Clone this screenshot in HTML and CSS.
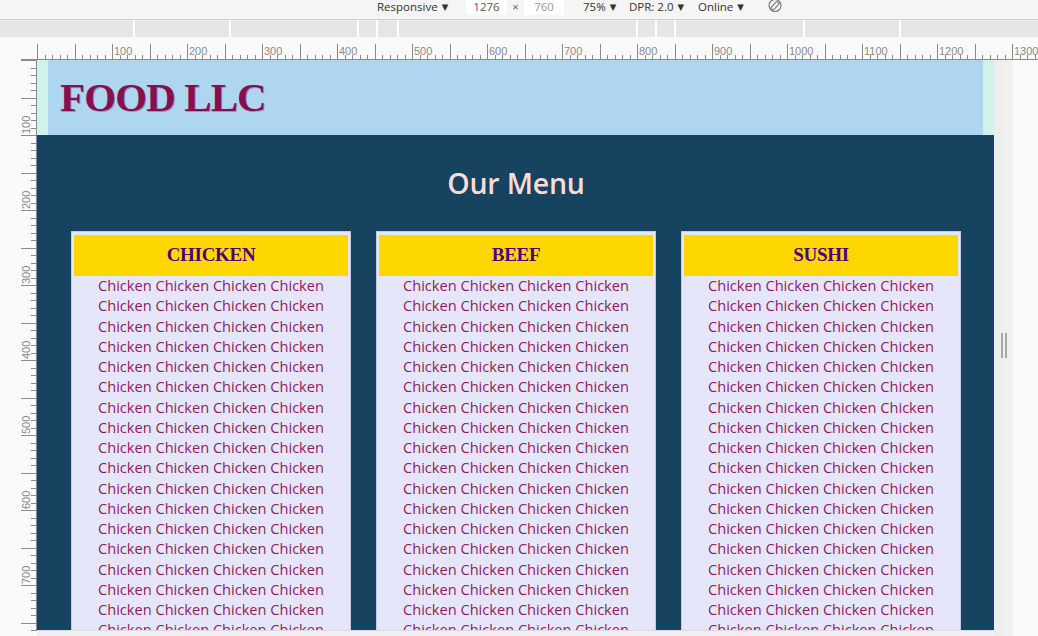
FILE: index.html
```html
<!DOCTYPE html>
<html lang="en">
<head>
<meta charset="utf-8">
<title>FOOD LLC - Our Menu</title>
<link rel="stylesheet" href="styles.css">
</head>
<body>
<div class="devtools">
  <div class="toolbar">
    <span class="tb-select tb-resp">Responsive <span class="caret">▼</span></span>
    <span class="tb-input">1276</span>
    <span class="tb-x">×</span>
    <span class="tb-input tb-dim">760</span>
    <span class="tb-spacer"></span>
    <span class="tb-select tb-zoom">75% <span class="caret">▼</span></span>
    <span class="tb-select tb-dpr">DPR: 2.0 <span class="caret">▼</span></span>
    <span class="tb-select tb-net">Online <span class="caret">▼</span></span>
    <svg class="tb-icon" width="16" height="14" viewBox="0 0 16 14">
      <circle cx="8" cy="6.5" r="6" fill="none" stroke="#777" stroke-width="1.1"/>
      <path d="M3.6 9.2 L9.6 2.4 M6.4 11.2 L12.4 4.4 M3.6 9.2 L6.4 11.2 M9.6 2.4 L12.4 4.4" fill="none" stroke="#777" stroke-width="1.1"/>
    </svg>
  </div>
  <div class="mediabar">
    <span class="mq mq-a"></span><span class="mq mq-b"></span><span class="mq mq-c"></span><span class="mq mq-d"></span><span class="mq mq-e"></span><span class="mq mq-f"></span><span class="mq mq-d"></span><span class="mq mq-d"></span><span class="mq mq-g"></span><span class="mq mq-b"></span><span class="mq mq-rest"></span>
  </div>
  <div class="hruler">
    <svg width="1038" height="23" viewBox="0 0 1038 23">
      <defs>
        <pattern id="hticks" x="37" y="0" width="75" height="23" patternUnits="userSpaceOnUse">
          <rect x="0" y="7" width="1" height="16" fill="#8a8a8a"/>
          <rect x="8" y="18" width="1" height="5" fill="#8a8a8a"/>
          <rect x="15" y="18" width="1" height="5" fill="#8a8a8a"/>
          <rect x="23" y="18" width="1" height="5" fill="#8a8a8a"/>
          <rect x="30" y="18" width="1" height="5" fill="#8a8a8a"/>
          <rect x="38" y="7" width="1" height="16" fill="#8a8a8a"/>
          <rect x="45" y="18" width="1" height="5" fill="#8a8a8a"/>
          <rect x="53" y="18" width="1" height="5" fill="#8a8a8a"/>
          <rect x="60" y="18" width="1" height="5" fill="#8a8a8a"/>
          <rect x="68" y="18" width="1" height="5" fill="#8a8a8a"/>
        </pattern>
      </defs>
      <rect x="37" y="0" width="1001" height="23" fill="url(#hticks)"/>
      <rect x="21" y="22" width="1017" height="1" fill="#8a8a8a"/>
      <g class="rlabel">
        <text x="114" y="18">100</text>
        <text x="189" y="18">200</text>
        <text x="264" y="18">300</text>
        <text x="339" y="18">400</text>
        <text x="414" y="18">500</text>
        <text x="489" y="18">600</text>
        <text x="564" y="18">700</text>
        <text x="639" y="18">800</text>
        <text x="714" y="18">900</text>
        <text x="789" y="18">1000</text>
        <text x="864" y="18">1100</text>
        <text x="939" y="18">1200</text>
        <text x="1014" y="18">1300</text>
      </g>
    </svg>
  </div>
  <div class="stage">
    <div class="vruler">
      <svg width="37" height="576" viewBox="0 0 37 576">
        <defs>
          <pattern id="vticks" x="0" y="0" width="37" height="75" patternUnits="userSpaceOnUse">
            <rect x="21" y="0" width="15" height="1" fill="#8a8a8a"/>
            <rect x="31" y="8" width="5" height="1" fill="#8a8a8a"/>
            <rect x="31" y="15" width="5" height="1" fill="#8a8a8a"/>
            <rect x="31" y="23" width="5" height="1" fill="#8a8a8a"/>
            <rect x="31" y="30" width="5" height="1" fill="#8a8a8a"/>
            <rect x="21" y="38" width="15" height="1" fill="#8a8a8a"/>
            <rect x="31" y="45" width="5" height="1" fill="#8a8a8a"/>
            <rect x="31" y="53" width="5" height="1" fill="#8a8a8a"/>
            <rect x="31" y="60" width="5" height="1" fill="#8a8a8a"/>
            <rect x="31" y="68" width="5" height="1" fill="#8a8a8a"/>
          </pattern>
        </defs>
        <rect x="0" y="0" width="37" height="571" fill="url(#vticks)"/>
        <rect x="36" y="0" width="1" height="571" fill="#8a8a8a"/>
        <g class="rlabel">
          <text transform="translate(30 74) rotate(-90)">100</text>
          <text transform="translate(30 149) rotate(-90)">200</text>
          <text transform="translate(30 224) rotate(-90)">300</text>
          <text transform="translate(30 299) rotate(-90)">400</text>
          <text transform="translate(30 374) rotate(-90)">500</text>
          <text transform="translate(30 449) rotate(-90)">600</text>
          <text transform="translate(30 524) rotate(-90)">700</text>
        </g>
      </svg>
    </div>
    <div class="device">
      <div class="viewport">
        <header class="site-header">
          <h1 class="brand">FOOD LLC</h1>
        </header>
        <main class="menu">
          <h2 class="menu-title">Our Menu</h2>
          <div class="cards">
            <section class="card">
              <h3 class="card-head">CHICKEN</h3>
              <p class="card-text">
Chicken Chicken Chicken Chicken Chicken Chicken Chicken Chicken
Chicken Chicken Chicken Chicken Chicken Chicken Chicken Chicken
Chicken Chicken Chicken Chicken Chicken Chicken Chicken Chicken
Chicken Chicken Chicken Chicken Chicken Chicken Chicken Chicken
Chicken Chicken Chicken Chicken Chicken Chicken Chicken Chicken
Chicken Chicken Chicken Chicken Chicken Chicken Chicken Chicken
Chicken Chicken Chicken Chicken Chicken Chicken Chicken Chicken
Chicken Chicken Chicken Chicken Chicken Chicken Chicken Chicken
Chicken Chicken Chicken Chicken Chicken Chicken Chicken Chicken
Chicken Chicken Chicken Chicken Chicken Chicken Chicken Chicken
              </p>
            </section>
            <section class="card">
              <h3 class="card-head">BEEF</h3>
              <p class="card-text">
Chicken Chicken Chicken Chicken Chicken Chicken Chicken Chicken
Chicken Chicken Chicken Chicken Chicken Chicken Chicken Chicken
Chicken Chicken Chicken Chicken Chicken Chicken Chicken Chicken
Chicken Chicken Chicken Chicken Chicken Chicken Chicken Chicken
Chicken Chicken Chicken Chicken Chicken Chicken Chicken Chicken
Chicken Chicken Chicken Chicken Chicken Chicken Chicken Chicken
Chicken Chicken Chicken Chicken Chicken Chicken Chicken Chicken
Chicken Chicken Chicken Chicken Chicken Chicken Chicken Chicken
Chicken Chicken Chicken Chicken Chicken Chicken Chicken Chicken
Chicken Chicken Chicken Chicken Chicken Chicken Chicken Chicken
              </p>
            </section>
            <section class="card">
              <h3 class="card-head">SUSHI</h3>
              <p class="card-text">
Chicken Chicken Chicken Chicken Chicken Chicken Chicken Chicken
Chicken Chicken Chicken Chicken Chicken Chicken Chicken Chicken
Chicken Chicken Chicken Chicken Chicken Chicken Chicken Chicken
Chicken Chicken Chicken Chicken Chicken Chicken Chicken Chicken
Chicken Chicken Chicken Chicken Chicken Chicken Chicken Chicken
Chicken Chicken Chicken Chicken Chicken Chicken Chicken Chicken
Chicken Chicken Chicken Chicken Chicken Chicken Chicken Chicken
Chicken Chicken Chicken Chicken Chicken Chicken Chicken Chicken
Chicken Chicken Chicken Chicken Chicken Chicken Chicken Chicken
Chicken Chicken Chicken Chicken Chicken Chicken Chicken Chicken
              </p>
            </section>
          </div>
        </main>
      </div>
      <div class="hscroll"></div>
    </div>
    <div class="rightstrip">
      <span class="handle"></span>
    </div>
  </div>
</div>
</body>
</html>
```

FILE: styles.css
```css
* { box-sizing: border-box; }

html, body {
  margin: 0;
  padding: 0;
  background: #fafafa;
  overflow: hidden;
}

.devtools {
  width: 1038px;
  height: 636px;
  overflow: hidden;
  font-family: "Open Sans", "Liberation Sans", sans-serif;
}

/* ---------- top device toolbar ---------- */
.toolbar {
  height: 20px;
  background: #f5f5f5;
  border-bottom: 1px solid #cfcfcf;
  display: flex;
  align-items: flex-start;
  padding-left: 377px;
  font-size: 11.5px;
  line-height: 13px;
  color: #333;
}

.tb-select, .tb-input, .tb-x, .tb-spacer {
  height: 15px;
  padding-bottom: 2px;
  white-space: nowrap;
}

.caret {
  font-family: "DejaVu Sans", sans-serif;
  font-size: 8.5px;
  position: relative;
  top: -1px;
  margin-left: 1px;
  color: #333;
}

.tb-resp { width: 89px; }
.tb-input {
  width: 41px;
  background: #fff;
  text-align: center;
  color: #555;
}
.tb-dim { width: 40px; color: #9a9a9a; }
.tb-x { width: 17px; text-align: center; color: #666; }
.tb-spacer { width: 19px; }
.tb-zoom { width: 46px; }
.tb-dpr { width: 69px; }
.tb-net { width: 69px; }
.tb-icon { display: block; margin-top: -1px; }

/* ---------- media query bar ---------- */
.mediabar {
  height: 17px;
  display: flex;
  gap: 2px;
  background: #ffffff;
}
.mq { background: #e6e6e6; height: 17px; flex: none; }
.mq-a { width: 133px; }
.mq-b { width: 94px; }
.mq-c { width: 126px; }
.mq-d { width: 17px; }
.mq-e { width: 19px; }
.mq-f { width: 237px; }
.mq-g { width: 127px; }
.mq-rest { flex: 1; }

/* ---------- rulers ---------- */
.hruler {
  height: 23px;
  background: #fafafa;
}
.hruler svg, .vruler svg { display: block; }

.rlabel text {
  font-family: "Liberation Sans", "DejaVu Sans", sans-serif;
  font-size: 11px;
  fill: #8a8a8a;
}

.stage {
  display: flex;
  height: 576px;
}

.vruler {
  width: 37px;
  flex: none;
  background: #fafafa;
}

.device {
  width: 957px;
  flex: none;
  display: flex;
  flex-direction: column;
}

.hscroll {
  height: 6px;
  background: #efefef;
  border-top: 1px solid #dcdcdc;
}

.rightstrip {
  flex: 1;
  background: linear-gradient(to right, #ececec 0, #f2f2f2 19px, #fafafa 20px, #fafafa 100%);
  display: flex;
  align-items: flex-start;
  padding: 273px 0 0 7px;
}

.handle {
  width: 6px;
  height: 25px;
  border-left: 2px solid #a8a8a8;
  border-right: 2px solid #a8a8a8;
}

/* ---------- the page itself ---------- */
.viewport {
  height: 570px;
  overflow: hidden;
  background: #d1f2eb;
}

.site-header {
  margin: 0 11px;
  height: 75px;
  background: #aed6f1;
  display: flex;
  align-items: center;
  padding-left: 12px;
}

.brand {
  margin: 0;
  font-family: "Liberation Serif", "DejaVu Serif", serif;
  font-weight: bold;
  font-size: 41px;
  line-height: 41px;
  letter-spacing: -0.9px;
  color: #880e4f;
  text-shadow: 1px 1px 0 rgba(60, 60, 60, 0.35);
}

.menu {
  background: #154360;
  padding: 34px 33px 40px 34px;
  min-height: 495px;
}

.menu-title {
  margin: 0 0 33px;
  text-align: center;
  font-family: "Open Sans", sans-serif;
  font-weight: 600;
  font-size: 28.5px;
  line-height: 28.5px;
  letter-spacing: -0.2px;
  color: #fadbd8;
}

.cards {
  display: grid;
  grid-template-columns: repeat(3, 280px);
  gap: 25px;
}

.card {
  background: #e6e6fa;
  border: 1px solid #c3cbe4;
  padding: 3px 2px 0;
}

.card-head {
  margin: 0;
  height: 41px;
  background: #ffd700;
  display: flex;
  align-items: center;
  justify-content: center;
  font-family: "Liberation Serif", "DejaVu Serif", serif;
  font-weight: bold;
  font-size: 19px;
  letter-spacing: -0.3px;
  color: #4b0082;
}

.card-text {
  margin: -0.5px 0 0;
  text-align: center;
  font-family: "Open Sans", sans-serif;
  font-size: 14.6px;
  line-height: 20.25px;
  color: #901c5c;
}
```
